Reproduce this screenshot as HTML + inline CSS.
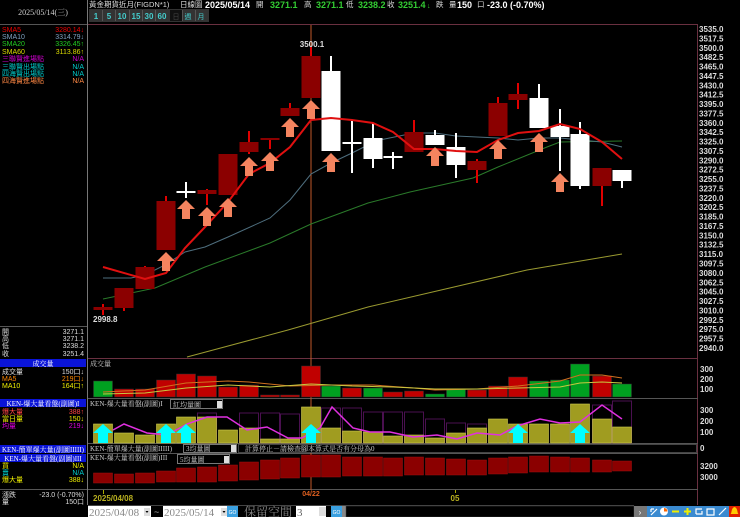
<!DOCTYPE html>
<html><head><meta charset="utf-8"><style>
html,body{margin:0;padding:0;background:#000;width:740px;height:517px;overflow:hidden}
svg{display:block}
text{font-family:"Liberation Sans","Noto Sans CJK TC",sans-serif}
.s{font-family:"Liberation Serif","Noto Serif CJK SC",serif}
</style></head><body>
<svg width="740" height="517" viewBox="0 0 740 517" xmlns="http://www.w3.org/2000/svg">
<rect width="740" height="517" fill="#000"/>
<!-- left panel -->
<line x1="87.5" y1="0" x2="87.5" y2="505" stroke="#777"/>
<text x="43" y="15" fill="#ccc" font-size="8" text-anchor="middle" class="s">2025/05/14(三)</text>
<line x1="0" y1="24.5" x2="87" y2="24.5" stroke="#555"/>
<g font-size="7" class="s">
<text x="2" y="32" fill="#e00">SMA5</text><text x="84" y="32" fill="#e00" text-anchor="end">3280.14↓</text>
<text x="2" y="39" fill="#7fa0c0">SMA10</text><text x="84" y="39" fill="#7fa0c0" text-anchor="end">3314.79↓</text>
<text x="2" y="46" fill="#2c2">SMA20</text><text x="84" y="46" fill="#2c2" text-anchor="end">3326.45↑</text>
<text x="2" y="54" fill="#dd0">SMA60</text><text x="84" y="54" fill="#dd0" text-anchor="end">3113.86↑</text>
<text x="2" y="61" fill="#c0c">三聯賢進場點</text><text x="84" y="61" fill="#c0c" text-anchor="end">N/A</text>
<text x="2" y="69" fill="#0cc">三聯賢出場點</text><text x="84" y="69" fill="#0cc" text-anchor="end">N/A</text>
<text x="2" y="76" fill="#0cc">四海賢出場點</text><text x="84" y="76" fill="#0cc" text-anchor="end">N/A</text>
<text x="2" y="83" fill="#f84">四海賢進場點</text><text x="84" y="83" fill="#f84" text-anchor="end">N/A</text>
</g>
<line x1="0" y1="326.5" x2="87" y2="326.5" stroke="#555"/>
<g font-size="7" class="s" fill="#ddd">
<text x="2" y="334">開</text><text x="84" y="334" text-anchor="end">3271.1</text>
<text x="2" y="341">高</text><text x="84" y="341" text-anchor="end">3271.1</text>
<text x="2" y="348">低</text><text x="84" y="348" text-anchor="end">3238.2</text>
<text x="2" y="356">收</text><text x="84" y="356" text-anchor="end">3251.4</text>
</g>
<rect x="0" y="359" width="86" height="8" fill="#0a14d8"/>
<text x="43" y="366" fill="#fff" font-size="7" text-anchor="middle" class="s">成交量</text>
<g font-size="7" class="s">
<text x="2" y="374" fill="#ddd">成交量</text><text x="84" y="374" fill="#ddd" text-anchor="end">150口↓</text>
<text x="2" y="381" fill="#f80">MA5</text><text x="84" y="381" fill="#f80" text-anchor="end">219口↓</text>
<text x="2" y="388" fill="#ee0">MA10</text><text x="84" y="388" fill="#ee0" text-anchor="end">164口↑</text>
</g>
<rect x="0" y="399" width="86" height="8" fill="#0a14d8"/>
<text x="43" y="406" fill="#fff" font-size="7" text-anchor="middle" class="s">KEN-爆大量看盤(副圖)I</text>
<g font-size="7" class="s">
<text x="2" y="414" fill="#f44">爆大量</text><text x="84" y="414" fill="#f44" text-anchor="end">388↑</text>
<text x="2" y="421" fill="#ee0">當日量</text><text x="84" y="421" fill="#ee0" text-anchor="end">150↓</text>
<text x="2" y="428" fill="#d0d">均量</text><text x="84" y="428" fill="#d0d" text-anchor="end">219↓</text>
</g>
<rect x="0" y="445" width="86" height="8" fill="#0a14d8"/>
<text x="43" y="452" fill="#fff" font-size="7" text-anchor="middle" class="s">KEN-簡單爆大量(副圖IIIII)</text>
<rect x="0" y="454" width="86" height="8" fill="#0a14d8"/>
<text x="43" y="461" fill="#fff" font-size="7" text-anchor="middle" class="s">KEN-爆大量看盤(副圖)III</text>
<g font-size="7" class="s">
<text x="2" y="468" fill="#ee0">買</text><text x="84" y="468" fill="#ee0" text-anchor="end">N/A</text>
<text x="2" y="475" fill="#0cc">賣</text><text x="84" y="475" fill="#0cc" text-anchor="end">N/A</text>
<text x="2" y="482" fill="#ee0">爆大量</text><text x="84" y="482" fill="#ee0" text-anchor="end">388↓</text>
</g>
<line x1="0" y1="489.5" x2="87" y2="489.5" stroke="#555"/>
<g font-size="7" class="s" fill="#ddd">
<text x="2" y="497">漲跌</text><text x="84" y="497" text-anchor="end">-23.0 (-0.70%)</text>
<text x="2" y="504">量</text><text x="84" y="504" text-anchor="end">150口</text>
</g>

<!-- header -->
<g font-size="7.5" class="s" fill="#ddd">
<text x="89" y="7">黃金期貨近月(FIGDN*1)</text>
<text x="180" y="7">日線圖</text>
<text x="256" y="7">開</text>
<text x="304" y="7">高</text>
<text x="346" y="7">低</text>
<text x="387" y="7">收</text>
<text x="436" y="7">跌</text>
<text x="449" y="7">量</text>
<text x="477" y="7">口</text>
</g>
<g font-family="Liberation Sans" font-weight="bold" font-size="9">
<text x="205" y="8" fill="#fff">2025/05/14</text>
<text x="270" y="8" fill="#3c3">3271.1</text>
<text x="316" y="8" fill="#3c3">3271.1</text>
<text x="358" y="8" fill="#3c3">3238.2</text>
<text x="398" y="8" fill="#3c3">3251.4</text>
<text x="427" y="8" fill="#3c3" font-size="7">↓</text>
<text x="457" y="8" fill="#fff">150</text>
<text x="487" y="8" fill="#fff">-23.0 (-0.70%)</text>
</g>
<g font-size="8" font-family="Liberation Sans" font-weight="bold">
<rect x="89" y="9" width="120" height="13" fill="#333"/>
<g fill="#4cc"><text x="96" y="19" text-anchor="middle">1</text><text x="109" y="19" text-anchor="middle">5</text><text x="122" y="19" text-anchor="middle">10</text><text x="136" y="19" text-anchor="middle">15</text><text x="149" y="19" text-anchor="middle">30</text><text x="162" y="19" text-anchor="middle">60</text></g>
<rect x="170" y="10" width="12" height="11" fill="#111"/>
<text x="176" y="19" fill="#444" text-anchor="middle" font-weight="normal" font-size="7">日</text>
<text x="188" y="19" fill="#4cc" text-anchor="middle" font-weight="normal" font-size="7">週</text>
<text x="201" y="19" fill="#4cc" text-anchor="middle" font-weight="normal" font-size="7">月</text>
<g stroke="#555"><line x1="102.5" y1="10" x2="102.5" y2="21"/><line x1="115.5" y1="10" x2="115.5" y2="21"/><line x1="129.5" y1="10" x2="129.5" y2="21"/><line x1="142.5" y1="10" x2="142.5" y2="21"/><line x1="155.5" y1="10" x2="155.5" y2="21"/><line x1="182.5" y1="10" x2="182.5" y2="21"/><line x1="195.5" y1="10" x2="195.5" y2="21"/></g>
</g>

<!-- main chart frame -->
<line x1="88" y1="24.5" x2="698" y2="24.5" stroke="#6a3040"/>
<line x1="697.5" y1="24" x2="697.5" y2="505" stroke="#6a3040"/>
<line x1="88" y1="358.5" x2="698" y2="358.5" stroke="#6a3040"/>
<line x1="88" y1="398.5" x2="698" y2="398.5" stroke="#555"/>
<line x1="88" y1="443.5" x2="698" y2="443.5" stroke="#555"/>
<line x1="88" y1="453.5" x2="698" y2="453.5" stroke="#555"/>
<line x1="88" y1="489.5" x2="698" y2="489.5" stroke="#555"/>
<line x1="311" y1="25" x2="311" y2="490" stroke="#c0582a" stroke-width="1"/>

<!-- y axis -->
<g font-size="8" fill="#ddd" font-family="Liberation Sans" font-weight="bold">
<text x="699" y="32">3535.0</text><text x="699" y="41.4">3517.5</text><text x="699" y="50.8">3500.0</text><text x="699" y="60.1">3482.5</text><text x="699" y="69.5">3465.0</text><text x="699" y="78.9">3447.5</text><text x="699" y="88.3">3430.0</text><text x="699" y="97.7">3412.5</text><text x="699" y="107">3395.0</text><text x="699" y="116.4">3377.5</text><text x="699" y="125.8">3360.0</text><text x="699" y="135.2">3342.5</text><text x="699" y="144.6">3325.0</text><text x="699" y="153.9">3307.5</text><text x="699" y="163.3">3290.0</text><text x="699" y="172.7">3272.5</text><text x="699" y="182.1">3255.0</text><text x="699" y="191.5">3237.5</text><text x="699" y="200.8">3220.0</text><text x="699" y="210.2">3202.5</text><text x="699" y="219.6">3185.0</text><text x="699" y="229">3167.5</text><text x="699" y="238.4">3150.0</text><text x="699" y="247.7">3132.5</text><text x="699" y="257.1">3115.0</text><text x="699" y="266.5">3097.5</text><text x="699" y="275.9">3080.0</text><text x="699" y="285.3">3062.5</text><text x="699" y="294.6">3045.0</text><text x="699" y="304">3027.5</text><text x="699" y="313.4">3010.0</text><text x="699" y="322.8">2992.5</text><text x="699" y="332.2">2975.0</text><text x="699" y="341.5">2957.5</text><text x="699" y="350.9">2940.0</text>
<text x="700" y="372">300</text><text x="700" y="382">200</text><text x="700" y="392">100</text>
<text x="700" y="413">300</text><text x="700" y="424">200</text><text x="700" y="435">100</text>
<text x="700" y="451">0</text>
<text x="700" y="469">3200</text><text x="700" y="480">3000</text>
</g>

<!-- MA lines -->
<polyline fill="none" stroke="#9a9a30" stroke-width="1" points="187,357 288,330 368,307 527,270 622,254"/>
<polyline fill="none" stroke="#2a7a2a" stroke-width="1" points="103,299 155,288 205,267 270,243 311,224 368,203 410,192 473,178 498,167 547,147 560,142 622,141"/>
<polyline fill="none" stroke="#4e6e7e" stroke-width="1" points="103,278 131,278 145,275 165,265 185,252 205,247 228,237 270,218 290,200 311,174 331,163 352,153 368,145 380,140 414,133 435,133 456,136 498,138 518,140 539,138 560,138 580,140 602,142 622,147"/>

<!-- candles -->
<g fill="#e00000">
<rect x="102" y="304" width="2" height="11"/><rect x="123" y="288" width="2" height="23"/><rect x="144" y="266" width="2" height="23"/><rect x="165" y="196" width="2" height="54"/><rect x="206" y="189" width="2" height="16"/><rect x="248" y="131" width="2" height="23"/><rect x="269" y="138" width="2" height="11"/><rect x="289" y="103" width="2" height="13"/><rect x="310" y="47" width="2" height="51"/><rect x="413" y="120" width="2" height="32"/><rect x="476" y="159" width="2" height="24"/><rect x="497" y="97" width="2" height="39"/><rect x="517" y="83" width="2" height="26"/><rect x="601" y="168" width="2" height="38"/>
</g>
<g fill="#8b0000">
<rect x="93.5" y="307" width="19" height="3"/><rect x="114.5" y="288" width="19" height="20"/><rect x="135.5" y="267" width="19" height="22"/><rect x="156.5" y="201" width="19" height="49"/><rect x="197.5" y="190" width="19" height="4"/><rect x="218.5" y="154" width="19" height="41"/><rect x="239.5" y="142" width="19" height="10"/><rect x="260.5" y="138" width="19" height="2"/><rect x="280.5" y="108" width="19" height="8"/><rect x="301.5" y="56" width="19" height="42"/><rect x="404.5" y="132" width="19" height="20"/><rect x="467.5" y="161" width="19" height="9"/><rect x="488.5" y="103" width="19" height="33"/><rect x="508.5" y="94" width="19" height="6"/><rect x="592.5" y="168" width="19" height="18"/>
</g>
<g fill="#fff">
<rect x="185" y="182" width="2" height="16"/><rect x="176.5" y="191" width="19" height="2"/>
<rect x="330" y="56" width="2" height="95"/><rect x="321.5" y="71" width="19" height="80"/>
<rect x="351" y="121" width="2" height="52"/><rect x="342.5" y="142" width="19" height="2"/>
<rect x="372" y="123" width="2" height="45"/><rect x="363.5" y="138" width="19" height="21"/>
<rect x="392" y="152" width="2" height="17"/><rect x="383.5" y="156" width="19" height="2"/>
<rect x="434" y="130" width="2" height="15"/><rect x="425.5" y="135" width="19" height="10"/>
<rect x="455" y="133" width="2" height="45"/><rect x="446.5" y="147" width="19" height="18"/>
<rect x="538" y="84" width="2" height="44"/><rect x="529.5" y="98" width="19" height="30"/>
<rect x="559" y="109" width="2" height="62"/><rect x="550.5" y="126" width="19" height="11"/>
<rect x="579" y="122" width="2" height="67"/><rect x="570.5" y="134" width="19" height="52"/>
<rect x="621" y="170" width="2" height="18"/><rect x="612.5" y="170" width="19" height="11"/>
</g>
<polyline fill="none" stroke="#e01010" stroke-width="2" points="103,267 145,279 166,273 185,248 205,227 228,202 249,174 270,163 290,147 311,120 331,118 352,120 373,123 393,132 414,149 435,149 456,151 477,152 498,140 518,133 539,131 560,124 580,129 602,142 622,159"/>
<!-- orange arrows -->
<g fill="#f4845f">
<path d="M0,0 L9,9 L4,9 L4,19 L-4,19 L-4,9 L-9,9 Z" transform="translate(166,252)"/>
<path d="M0,0 L9,9 L4,9 L4,19 L-4,19 L-4,9 L-9,9 Z" transform="translate(186,200)"/>
<path d="M0,0 L9,9 L4,9 L4,19 L-4,19 L-4,9 L-9,9 Z" transform="translate(207,207)"/>
<path d="M0,0 L9,9 L4,9 L4,19 L-4,19 L-4,9 L-9,9 Z" transform="translate(228,198)"/>
<path d="M0,0 L9,9 L4,9 L4,19 L-4,19 L-4,9 L-9,9 Z" transform="translate(249,157)"/>
<path d="M0,0 L9,9 L4,9 L4,19 L-4,19 L-4,9 L-9,9 Z" transform="translate(270,152)"/>
<path d="M0,0 L9,9 L4,9 L4,19 L-4,19 L-4,9 L-9,9 Z" transform="translate(290,118)"/>
<path d="M0,0 L9,9 L4,9 L4,19 L-4,19 L-4,9 L-9,9 Z" transform="translate(311,100)"/>
<path d="M0,0 L9,9 L4,9 L4,19 L-4,19 L-4,9 L-9,9 Z" transform="translate(331,153)"/>
<path d="M0,0 L9,9 L4,9 L4,19 L-4,19 L-4,9 L-9,9 Z" transform="translate(435,147)"/>
<path d="M0,0 L9,9 L4,9 L4,19 L-4,19 L-4,9 L-9,9 Z" transform="translate(498,140)"/>
<path d="M0,0 L9,9 L4,9 L4,19 L-4,19 L-4,9 L-9,9 Z" transform="translate(539,133)"/>
<path d="M0,0 L9,9 L4,9 L4,19 L-4,19 L-4,9 L-9,9 Z" transform="translate(560,173)"/>
</g>
<text x="312" y="47" fill="#ddd" font-size="8" text-anchor="middle" font-family="Liberation Sans" font-weight="bold">3500.1</text>
<text x="93" y="322" fill="#ddd" font-size="8" font-family="Liberation Sans" font-weight="bold">2998.8</text>

<!-- volume panel -->
<text x="90" y="366" fill="#ccc" font-size="7" class="s">成交量</text>
<g fill="#c00000" stroke="#333" stroke-width="0.5">
<rect x="114.5" y="389" width="19" height="8"/><rect x="135.5" y="389" width="19" height="8"/><rect x="156.5" y="380" width="19" height="17"/><rect x="176.5" y="374" width="19" height="23"/><rect x="197.5" y="376" width="19" height="21"/><rect x="218.5" y="387" width="19" height="10"/><rect x="239.5" y="385" width="19" height="12"/><rect x="260.5" y="395" width="19" height="2"/><rect x="280.5" y="395" width="19" height="2"/><rect x="301.5" y="366" width="19" height="31"/><rect x="342.5" y="388" width="19" height="9"/><rect x="383.5" y="392" width="19" height="5"/><rect x="404.5" y="391" width="19" height="6"/><rect x="467.5" y="390" width="19" height="7"/><rect x="488.5" y="386" width="19" height="11"/><rect x="508.5" y="377" width="19" height="20"/><rect x="592.5" y="376" width="19" height="21"/>
</g>
<g fill="#00a020" stroke="#333" stroke-width="0.5">
<rect x="93.5" y="381" width="19" height="16"/><rect x="321.5" y="386" width="19" height="11"/><rect x="363.5" y="388" width="19" height="9"/><rect x="425.5" y="394" width="19" height="3"/><rect x="446.5" y="389" width="19" height="8"/><rect x="529.5" y="381" width="19" height="16"/><rect x="550.5" y="380" width="19" height="17"/><rect x="570.5" y="364" width="19" height="33"/><rect x="612.5" y="384" width="19" height="13"/>
</g>
<polyline fill="none" stroke="#d07020" stroke-width="1" points="103,392 145,390 186,383 228,381 249,382 290,386 331,385 373,385 414,388 435,390 477,389 518,386 560,381 580,375 602,375 622,378"/>
<polyline fill="none" stroke="#c8c840" stroke-width="1" points="103,394 145,393 186,388 228,385 270,387 311,384 352,386 393,387 435,389 477,389 518,388 560,387 580,383 602,382 622,383"/>

<!-- panel 3 -->
<g fill="none" stroke="#4a1050" stroke-width="1">
<rect x="197.5" y="413" width="19" height="30"/><rect x="239.5" y="413" width="19" height="30"/><rect x="260.5" y="413" width="19" height="30"/><rect x="280.5" y="414" width="19" height="29"/><rect x="321.5" y="408" width="19" height="35"/><rect x="342.5" y="408" width="19" height="35"/><rect x="363.5" y="412" width="19" height="31"/><rect x="383.5" y="412" width="19" height="31"/><rect x="404.5" y="412" width="19" height="31"/><rect x="425.5" y="419" width="19" height="24"/><rect x="446.5" y="423" width="19" height="20"/><rect x="467.5" y="424" width="19" height="19"/><rect x="592.5" y="405" width="19" height="38"/><rect x="612.5" y="401" width="19" height="42"/>
</g>
<g fill="#a09c20" stroke="#d0cc50" stroke-width="0.6">
<rect x="93.5" y="424" width="19" height="19"/><rect x="114.5" y="433" width="19" height="10"/><rect x="135.5" y="435" width="19" height="8"/><rect x="156.5" y="424" width="19" height="19"/><rect x="176.5" y="417" width="19" height="26"/><rect x="197.5" y="417" width="19" height="26"/><rect x="218.5" y="430" width="19" height="13"/><rect x="239.5" y="428" width="19" height="15"/><rect x="260.5" y="439" width="19" height="4"/><rect x="280.5" y="439" width="19" height="4"/><rect x="301.5" y="407" width="19" height="36"/><rect x="321.5" y="428" width="19" height="15"/><rect x="342.5" y="431" width="19" height="12"/><rect x="363.5" y="432" width="19" height="11"/><rect x="383.5" y="436" width="19" height="7"/><rect x="404.5" y="435" width="19" height="8"/><rect x="425.5" y="438" width="19" height="5"/><rect x="446.5" y="433" width="19" height="10"/><rect x="467.5" y="428" width="19" height="15"/><rect x="488.5" y="419" width="19" height="24"/><rect x="508.5" y="424" width="19" height="19"/><rect x="529.5" y="424" width="19" height="19"/><rect x="550.5" y="424" width="19" height="19"/><rect x="570.5" y="404" width="19" height="39"/><rect x="592.5" y="419" width="19" height="24"/><rect x="612.5" y="427" width="19" height="16"/>
</g>
<polyline fill="none" stroke="#e030e0" stroke-width="1.5" points="113,430 124,424 147,433 167,435 187,424 207,417 227,417 247,430 267,427 288,438 302,438 320,428 332,407 353,428 370,432 390,432 413,437 437,435 457,439 477,433 500,435 517,426 540,419 560,423 580,422 602,405 622,419"/>
<g fill="#00ffff">
<path d="M0,0 L10,9 L5,9 L5,19 L-5,19 L-5,9 L-10,9 Z" transform="translate(103,424)"/>
<path d="M0,0 L10,9 L5,9 L5,19 L-5,19 L-5,9 L-10,9 Z" transform="translate(166,424)"/>
<path d="M0,0 L10,9 L5,9 L5,19 L-5,19 L-5,9 L-10,9 Z" transform="translate(186,424)"/>
<path d="M0,0 L10,9 L5,9 L5,19 L-5,19 L-5,9 L-10,9 Z" transform="translate(311,424)"/>
<path d="M0,0 L10,9 L5,9 L5,19 L-5,19 L-5,9 L-10,9 Z" transform="translate(518,424)"/>
<path d="M0,0 L10,9 L5,9 L5,19 L-5,19 L-5,9 L-10,9 Z" transform="translate(580,424)"/>
</g>
<text x="90" y="406" fill="#ccc" font-size="7" class="s">KEN-爆大量看盤(副圖)I</text>
<rect x="170.5" y="399.5" width="52" height="9" fill="#000" stroke="#777"/>
<text x="173" y="407" fill="#ccc" font-size="7" class="s">紅均量圖</text>
<rect x="217" y="401" width="5" height="7" fill="#ddd"/>

<!-- panel 4 strip -->
<rect x="88" y="444" width="609" height="9" fill="#000"/>
<text x="90" y="451" fill="#ccc" font-size="7" class="s">KEN-簡單爆大量(副圖IIIII)</text>
<rect x="183.5" y="444.5" width="53" height="8" fill="#000" stroke="#777"/>
<text x="186" y="451" fill="#ccc" font-size="7" class="s">3均量圖</text>
<rect x="231" y="445" width="5" height="7" fill="#ddd"/>
<rect x="238.5" y="444.5" width="458" height="8" fill="none" stroke="#444"/>
<text x="245" y="451" fill="#ccc" font-size="7" class="s">計算停止－請檢查腳本算式是否有分母為0</text>

<!-- panel 5 -->
<g fill="#8b0000" stroke="#a01010" stroke-width="0.5">
<rect x="93.5" y="473" width="19" height="10"/><rect x="114.5" y="474" width="19" height="9"/><rect x="135.5" y="473" width="19" height="10"/><rect x="156.5" y="471" width="19" height="11"/><rect x="176.5" y="468" width="19" height="14"/><rect x="197.5" y="467" width="19" height="15"/><rect x="218.5" y="465" width="19" height="16"/><rect x="239.5" y="462" width="19" height="18"/><rect x="260.5" y="460" width="19" height="19"/><rect x="280.5" y="458" width="19" height="20"/><rect x="301.5" y="455" width="19" height="22"/><rect x="321.5" y="455" width="19" height="22"/><rect x="342.5" y="457" width="19" height="19"/><rect x="363.5" y="457" width="19" height="19"/><rect x="383.5" y="458" width="19" height="18"/><rect x="404.5" y="457" width="19" height="18"/><rect x="425.5" y="458" width="19" height="17"/><rect x="446.5" y="459" width="19" height="16"/><rect x="467.5" y="460" width="19" height="15"/><rect x="488.5" y="458" width="19" height="16"/><rect x="508.5" y="457" width="19" height="16"/><rect x="529.5" y="456" width="19" height="16"/><rect x="550.5" y="457" width="19" height="15"/><rect x="570.5" y="458" width="19" height="14"/><rect x="592.5" y="460" width="19" height="12"/><rect x="612.5" y="461" width="19" height="10"/>
</g>
<text x="90" y="460" fill="#ccc" font-size="7" class="s">KEN-爆大量看盤(副圖)III</text>
<rect x="177.5" y="454.5" width="52" height="9" fill="#000" stroke="#777"/>
<text x="180" y="462" fill="#ccc" font-size="7" class="s">5均量圖</text>
<rect x="224" y="456" width="5" height="7" fill="#ddd"/>

<!-- date axis -->
<line x1="103.5" y1="490" x2="103.5" y2="494" stroke="#aa0"/>
<text x="93" y="501" fill="#b8b020" font-size="8" font-family="Liberation Sans" font-weight="bold">2025/04/08</text>
<text x="311" y="496" fill="#e06020" font-size="7" font-family="Liberation Sans" font-weight="bold" text-anchor="middle">04/22</text>
<line x1="455.5" y1="490" x2="455.5" y2="493" stroke="#aa0"/>
<text x="455" y="501" fill="#b8b020" font-size="8" font-family="Liberation Sans" font-weight="bold" text-anchor="middle">05</text>

<!-- bottom controls -->
<rect x="0" y="505" width="740" height="12" fill="#000"/>
<line x1="88" y1="505.5" x2="634" y2="505.5" stroke="#444"/>
<rect x="88" y="506" width="63" height="11" fill="#fff"/>
<text x="89" y="516" fill="#888" font-size="11" class="s">2025/04/08</text>
<rect x="144" y="508" width="6" height="8" fill="#ddd"/><path d="M145.5,511 L148.5,511 L147,513 Z" fill="#000"/>
<text x="154" y="515" fill="#aaa" font-size="9">~</text>
<rect x="163" y="506" width="64" height="11" fill="#fff"/>
<text x="164" y="516" fill="#888" font-size="11" class="s">2025/05/14</text>
<rect x="221" y="508" width="6" height="8" fill="#ddd"/><path d="M222.5,511 L225.5,511 L224,513 Z" fill="#000"/>
<rect x="227" y="506" width="11" height="11" fill="#3aa0e0"/>
<text x="232.5" y="514" fill="#fff" font-size="5" text-anchor="middle">GO</text>
<text x="244" y="516" fill="#888" font-size="12" class="s">保留空間</text>
<rect x="296" y="506" width="30" height="11" fill="#fff"/>
<text x="297" y="516" fill="#666" font-size="11" class="s">3</text>
<rect x="319" y="507" width="7" height="9" fill="#ddd"/>
<rect x="331" y="506" width="11" height="11" fill="#3aa0e0"/>
<text x="336.5" y="514" fill="#fff" font-size="5" text-anchor="middle">GO</text>
<rect x="342" y="506" width="4" height="11" fill="#888"/>
<rect x="346" y="506" width="288" height="11" fill="#000" stroke="#444" stroke-width="0.5"/>
<rect x="634" y="506" width="13" height="11" fill="#777"/>
<text x="640" y="515" fill="#fff" font-size="8" text-anchor="middle">›</text>
<rect x="647" y="506" width="82" height="11" fill="#3a8ad0"/>
<g stroke="#fff" stroke-width="1.2" fill="none">
<path d="M651,515 L657,509 M651,509 L651,512 M651,509 L654,509"/>
<circle cx="664" cy="511.5" r="4" fill="#fff" stroke="none"/>
<path d="M672,511.5 L679,511.5" stroke="#ee0" stroke-width="2"/>
<path d="M684,511.5 L691,511.5 M687.5,508 L687.5,515" stroke="#ee0" stroke-width="2"/>
<path d="M696,514 L696,509 L702,509 M696,514 L702,514 L702,511"/>
<path d="M707,509 L714,509 L714,515 L707,515 Z"/>
<path d="M719,515 L726,508"/>
</g>
<path d="M664,511.5 L664,508 A3.5,3.5 0 0 1 667.5,511.5 Z" fill="#f60"/>
<rect x="729" y="506" width="11" height="11" fill="#e02000"/>
<path d="M734.5,507 C731,508 732,513 730.5,514 L738.5,514 C737,513 738,508 734.5,507 Z" fill="#fc0"/>
</svg>
</body></html>
